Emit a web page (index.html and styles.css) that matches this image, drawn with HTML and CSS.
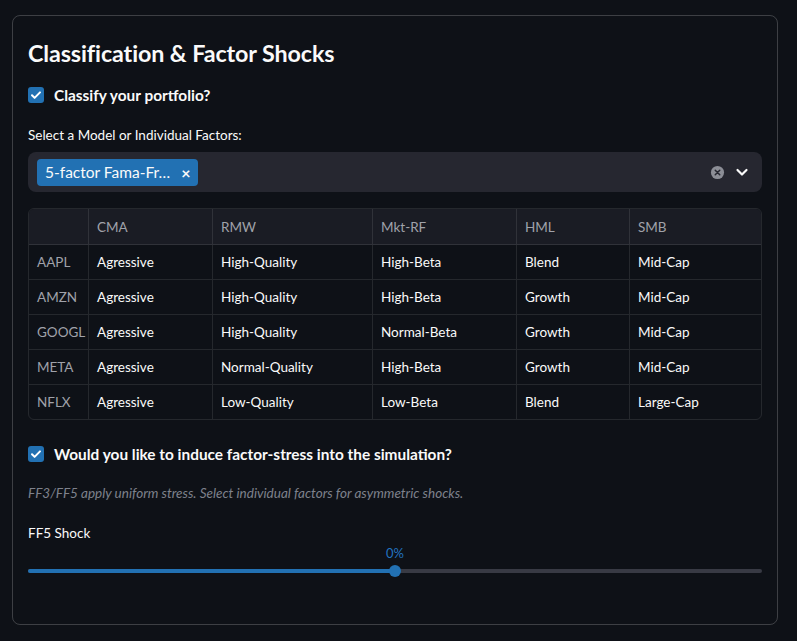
FILE: index.html
```html
<!DOCTYPE html>
<html>
<head>
<meta charset="utf-8">
<link rel="stylesheet" href="styles.css">
</head>
<body>
<div class="panel">
  <h3 class="title">Classification &amp; Factor Shocks</h3>

  <label class="check">
    <span class="box"><svg viewBox="0 0 16 16" width="16" height="16"><path d="M4 8.3l2.6 2.6L12 5.4" fill="none" stroke="#fff" stroke-width="2" stroke-linecap="round" stroke-linejoin="round"/></svg></span>
    <span class="check-label">Classify your portfolio?</span>
  </label>

  <div class="field-label">Select a Model or Individual Factors:</div>
  <div class="select">
    <div class="tag"><span class="tag-text">5-factor Fama-Fr…</span><span class="tag-x">×</span></div>
    <div class="select-icons">
      <svg class="clear" viewBox="0 0 16 16" width="15" height="15"><circle cx="8" cy="8" r="7" fill="#8c8e96"/><path d="M5.6 5.6l4.8 4.8M10.4 5.6l-4.8 4.8" stroke="#262730" stroke-width="1.6" stroke-linecap="round"/></svg>
      <svg class="chev" viewBox="0 0 16 16" width="16" height="16"><path d="M3.5 6l4.5 4.5L12.5 6" fill="none" stroke="#fafafa" stroke-width="2.2" stroke-linecap="round" stroke-linejoin="round"/></svg>
    </div>
  </div>

  <div class="grid">
    <div class="row head">
      <div class="c idx"></div><div class="c c1">CMA</div><div class="c c2">RMW</div><div class="c c3">Mkt-RF</div><div class="c c4">HML</div><div class="c c5">SMB</div>
    </div>
    <div class="row">
      <div class="c idx">AAPL</div><div class="c c1">Agressive</div><div class="c c2">High-Quality</div><div class="c c3">High-Beta</div><div class="c c4">Blend</div><div class="c c5">Mid-Cap</div>
    </div>
    <div class="row">
      <div class="c idx">AMZN</div><div class="c c1">Agressive</div><div class="c c2">High-Quality</div><div class="c c3">High-Beta</div><div class="c c4">Growth</div><div class="c c5">Mid-Cap</div>
    </div>
    <div class="row">
      <div class="c idx">GOOGL</div><div class="c c1">Agressive</div><div class="c c2">High-Quality</div><div class="c c3">Normal-Beta</div><div class="c c4">Growth</div><div class="c c5">Mid-Cap</div>
    </div>
    <div class="row">
      <div class="c idx">META</div><div class="c c1">Agressive</div><div class="c c2">Normal-Quality</div><div class="c c3">High-Beta</div><div class="c c4">Growth</div><div class="c c5">Mid-Cap</div>
    </div>
    <div class="row last">
      <div class="c idx">NFLX</div><div class="c c1">Agressive</div><div class="c c2">Low-Quality</div><div class="c c3">Low-Beta</div><div class="c c4">Blend</div><div class="c c5">Large-Cap</div>
    </div>
  </div>

  <label class="check check2">
    <span class="box"><svg viewBox="0 0 16 16" width="16" height="16"><path d="M4 8.3l2.6 2.6L12 5.4" fill="none" stroke="#fff" stroke-width="2" stroke-linecap="round" stroke-linejoin="round"/></svg></span>
    <span class="check-label">Would you like to induce factor-stress into the simulation?</span>
  </label>

  <p class="caption">FF3/FF5 apply uniform stress. Select individual factors for asymmetric shocks.</p>

  <div class="field-label shock-label">FF5 Shock</div>
  <div class="slider">
    <div class="slider-value" style="left: 50%">0%</div>
    <div class="track"><div class="fill" style="width: 50%"></div></div>
    <div class="thumb" style="left: 50%"></div>
  </div>
</div>
</body>
</html>
```

FILE: styles.css
```css
* { box-sizing: border-box; }
html, body {
  margin: 0;
  background: #0e1117;
}
body {
  font-family: "Lato", "Open Sans", sans-serif;
  color: #fafafa;
  padding: 15px 19px 16px 12px;
}
.panel {
  border: 1px solid rgba(250, 250, 250, 0.2);
  border-radius: 8px;
  height: 610px;
  padding: 15px 15px;
  display: flex;
  flex-direction: column;
}
.title {
  margin: 7px 0 0 0;
  font-size: 23.3px;
  font-weight: 700;
  line-height: 30px;
  letter-spacing: -0.1px;
}
.check {
  display: flex;
  align-items: center;
  gap: 10px;
  margin-top: 17px;
}
.box {
  width: 16px;
  height: 16px;
  border-radius: 3px;
  background: #2271b3;
  display: flex;
}
.check-label {
  font-size: 15.4px;
  font-weight: 700;
  line-height: 20px;
}
.field-label {
  font-size: 13.5px;
  line-height: 20px;
  margin-top: 20px;
}
.select {
  margin-top: 7px;
  height: 40px;
  background: #262730;
  border-radius: 8px;
  display: flex;
  align-items: center;
  justify-content: space-between;
  padding: 0 12px 0 9px;
}
.tag {
  height: 27px;
  background: #2271b3;
  border-radius: 4px;
  display: flex;
  align-items: center;
  padding: 0 8px 0 8px;
  gap: 11px;
  font-size: 15.5px;
}
.tag-x {
  font-size: 16px;
  font-weight: 700;
}
.select-icons {
  display: flex;
  align-items: center;
  gap: 9px;
}
.clear, .chev { display: block; }
.grid {
  margin-top: 16px;
  border: 1px solid rgba(250, 250, 250, 0.1);
  border-radius: 6px;
  overflow: hidden;
  font-size: 13.5px;
}
.row {
  display: grid;
  grid-template-columns: 60px 124px 160px 144px 113px 1fr;
  height: 35px;
  border-bottom: 1px solid rgba(250, 250, 250, 0.1);
}
.row.last { border-bottom: none; height: 34px; }
.row.head {
  height: 36px;
  background: #1a1c24;
  color: #a0a2aa;
}
.c {
  display: flex;
  align-items: center;
  padding: 0 8px;
  border-right: 1px solid rgba(250, 250, 250, 0.1);
  white-space: nowrap;
}
.c5 { border-right: none; }
.idx { color: #a0a2aa; }
.check2 { margin-top: 24px; }
.caption {
  margin: 19px 0 0 0;
  font-size: 13.5px;
  font-style: italic;
  color: #7e818c;
  line-height: 20px;
}
.shock-label { margin-top: 20px; }
.slider {
  position: relative;
  height: 40px;
  margin-top: 0;
}
.slider-value {
  position: absolute;
  top: 2px;
  transform: translateX(-50%);
  font-size: 13px;
  color: #2273c0;
}
.track {
  position: absolute;
  left: 0;
  right: 0;
  top: 26px;
  height: 4px;
  border-radius: 2px;
  background: #383a44;
}
.fill {
  height: 100%;
  background: #2271b3;
  border-radius: 2px;
}
.thumb {
  position: absolute;
  top: 22px;
  width: 12px;
  height: 12px;
  margin-left: -6px;
  border-radius: 50%;
  background: #2271b3;
}
```
